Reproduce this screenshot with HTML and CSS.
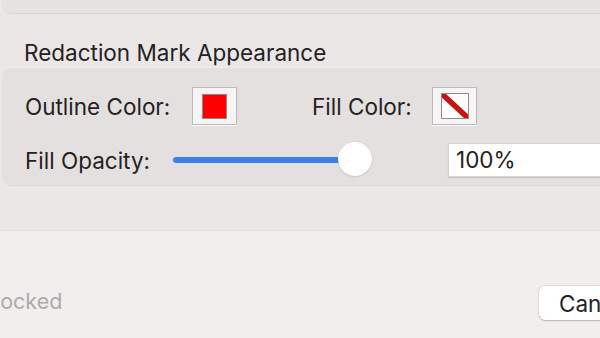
FILE: index.html
```html
<!DOCTYPE html>
<html>
<head>
<meta charset="utf-8">
<link rel="stylesheet" href="styles.css">
</head>
<body>
<div class="window">
  <div class="upper">
    <div class="top-panel"></div>
    <div class="section-title">Redaction Mark Appearance</div>
    <div class="box">
      <div class="row row-colors">
        <span class="label outline-label">Outline Color:</span>
        <span class="well"><span class="swatch-red"></span></span>
        <span class="label fill-label">Fill Color:</span>
        <span class="well">
          <span class="swatch-none">
            <svg width="26" height="24" viewBox="0 0 26 24"><line x1="0" y1="0" x2="26" y2="24" stroke="#cc1111" stroke-width="5.5"/></svg>
          </span>
        </span>
      </div>
      <div class="row row-opacity">
        <span class="label opacity-label">Fill Opacity:</span>
        <div class="slider">
          <div class="track"></div>
          <div class="knob"></div>
        </div>
        <div class="field">100%</div>
      </div>
    </div>
  </div>
  <div class="footer">
    <span class="locked">Locked</span>
    <button class="cancel">Cancel</button>
  </div>
</div>
</body>
</html>
```
FILE: styles.css
```css
html, body {
  margin: 0;
  padding: 0;
}
body {
  width: 600px;
  height: 338px;
  overflow: hidden;
  background: #ebe7e7;
  font-family: "Inter", "Liberation Sans", sans-serif;
  color: #242222;
}
.window {
  display: flex;
  flex-direction: column;
  height: 338px;
}
.upper {
  height: 230px;
  display: flex;
  flex-direction: column;
}
.top-panel {
  height: 13px;
  flex-shrink: 0;
  margin-left: 2px;
  margin-right: -12px;
  background: #e6e2e2;
  border-bottom: 1px solid #dad6d6;
  border-radius: 0 0 0 9px;
}
.section-title {
  font-size: 22.5px;
  padding-left: 24px;
  margin-top: 26px;
  height: 26px;
  line-height: 26px;
  white-space: nowrap;
}
.box {
  margin-top: 1px;
  margin-left: 2px;
  margin-right: -12px;
  height: 120px;
  box-sizing: border-box;
  background: #e4e0e0;
  border-top: 1px solid #f1eded;
  border-radius: 9px 0 0 9px;
  box-shadow: 0 1px 0 #f2eeee;
  display: flex;
  flex-direction: column;
  flex-shrink: 0;
}
.row {
  display: flex;
  align-items: center;
  padding-left: 23px;
  white-space: nowrap;
}
.row > * {
  flex-shrink: 0;
}
.row-colors {
  margin-top: 19px;
  height: 38px;
}
.row-opacity {
  margin-top: 18px;
  height: 34px;
}
.label {
  font-size: 22.5px;
}
.outline-label {
  width: 167px;
}
.fill-label {
  margin-left: 75px;
  width: 120px;
}
.opacity-label {
  width: 148px;
}
.well {
  width: 45px;
  height: 38px;
  background: #f6f4f4;
  border: 1px solid #bdbaba;
  box-sizing: border-box;
  display: flex;
  align-items: center;
  justify-content: center;
  box-shadow: 0 1px 0 #faf8f8;
}
.swatch-red {
  width: 25px;
  height: 25px;
  background: #fe0000;
  border: 1.5px solid #8c8a8a;
  box-sizing: border-box;
}
.swatch-none {
  width: 28px;
  height: 26px;
  background: #fff;
  border: 1.5px solid #8c8a8a;
  box-sizing: border-box;
  overflow: hidden;
  display: flex;
}
.swatch-none svg {
  display: block;
}
.slider {
  position: relative;
  width: 199px;
  height: 34px;
}
.track {
  position: absolute;
  left: 0;
  top: 14px;
  width: 185px;
  height: 6px;
  border-radius: 3px;
  background: #3c7fee;
}
.knob {
  position: absolute;
  left: 165px;
  top: -1px;
  width: 34px;
  height: 34px;
  border-radius: 50%;
  background: #ffffff;
  box-shadow: 0 0.5px 2px rgba(0,0,0,0.18);
}
.field {
  margin-left: 76px;
  width: 170px;
  height: 34px;
  box-sizing: border-box;
  background: #ffffff;
  border: 1px solid #d6d3d3;
  box-shadow: 0 1px 1px rgba(0,0,0,0.12);
  font-size: 22.5px;
  line-height: 32px;
  padding-left: 7px;
}
.footer {
  flex: 1;
  background: #f2eeee;
  border-top: 1px solid #e1dddd;
  display: flex;
  align-items: flex-start;
  padding-top: 55px;
  white-space: nowrap;
}
.locked {
  font-size: 21.5px;
  color: #adaaaa;
  margin-left: -12px;
  margin-top: 2px;
  line-height: 26px;
}
.cancel {
  margin-left: auto;
  margin-right: -60px;
  width: 121px;
  height: 34px;
  flex-shrink: 0;
  background: #ffffff;
  border: none;
  border-radius: 6px;
  box-shadow: 0 0 0 0.5px rgba(0,0,0,0.12), 0 1px 1.5px rgba(0,0,0,0.2);
  font-family: "Inter", "Liberation Sans", sans-serif;
  font-size: 22.5px;
  color: #242222;
  text-align: left;
  padding-left: 20px;
}
```
